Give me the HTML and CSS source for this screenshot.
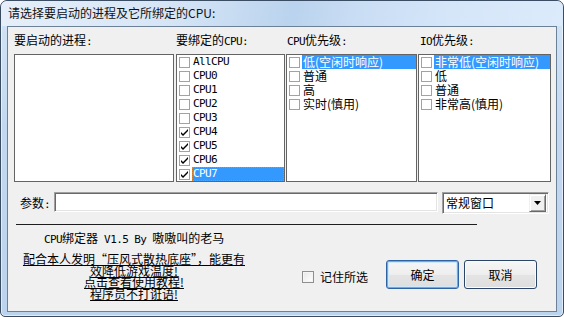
FILE: index.html
```html
<!DOCTYPE html>
<html lang="zh-CN">
<head>
<meta charset="utf-8">
<title>CPU绑定器</title>
<link rel="stylesheet" href="styles.css">
</head>
<body>
<div class="window">
  <div class="titlebar">请选择要启动的进程及它所绑定的CPU:</div>
  <div class="client">
    <div class="cols">
      <div class="col c1">
        <div class="lab">要启动的进程<span class="m">:</span></div>
        <div class="list"></div>
      </div>
      <div class="col c2">
        <div class="lab">要绑定的<span class="m">CPU:</span></div>
        <div class="list">
          <div class="row"><span class="cb"></span><span class="t m">AllCPU</span></div>
          <div class="row"><span class="cb"></span><span class="t m">CPU0</span></div>
          <div class="row"><span class="cb"></span><span class="t m">CPU1</span></div>
          <div class="row"><span class="cb"></span><span class="t m">CPU2</span></div>
          <div class="row"><span class="cb"></span><span class="t m">CPU3</span></div>
          <div class="row"><span class="cb on"><svg viewBox="0 0 9 9" width="9" height="9"><path d="M1 4 L3 6 L8 1 L8 3 L3 8 L1 6 Z"/></svg></span><span class="t m">CPU4</span></div>
          <div class="row"><span class="cb on"><svg viewBox="0 0 9 9" width="9" height="9"><path d="M1 4 L3 6 L8 1 L8 3 L3 8 L1 6 Z"/></svg></span><span class="t m">CPU5</span></div>
          <div class="row"><span class="cb on"><svg viewBox="0 0 9 9" width="9" height="9"><path d="M1 4 L3 6 L8 1 L8 3 L3 8 L1 6 Z"/></svg></span><span class="t m">CPU6</span></div>
          <div class="row sel focus"><span class="cb on"><svg viewBox="0 0 9 9" width="9" height="9"><path d="M1 4 L3 6 L8 1 L8 3 L3 8 L1 6 Z"/></svg></span><span class="t m">CPU7</span></div>
        </div>
      </div>
      <div class="col c3">
        <div class="lab"><span class="m">CPU</span>优先级<span class="m">:</span></div>
        <div class="list">
          <div class="row sel"><span class="cb"></span><span class="t">低(空闲时响应)</span></div>
          <div class="row"><span class="cb"></span><span class="t">普通</span></div>
          <div class="row"><span class="cb"></span><span class="t">高</span></div>
          <div class="row"><span class="cb"></span><span class="t">实时(慎用)</span></div>
        </div>
      </div>
      <div class="col c4">
        <div class="lab"><span class="m">IO</span>优先级<span class="m">:</span></div>
        <div class="list">
          <div class="row sel"><span class="cb"></span><span class="t">非常低(空闲时响应)</span></div>
          <div class="row"><span class="cb"></span><span class="t">低</span></div>
          <div class="row"><span class="cb"></span><span class="t">普通</span></div>
          <div class="row"><span class="cb"></span><span class="t">非常高(慎用)</span></div>
        </div>
      </div>
    </div>

    <div class="param">
      <div class="plab">参数<span class="m">:</span></div>
      <div class="input"></div>
      <div class="combo">
        <span class="ctext">常规窗口</span>
        <span class="dd"><svg viewBox="0 0 7 4" width="7" height="4"><path d="M0 0 H7 L3.5 4 Z"/></svg></span>
      </div>
    </div>

    <div class="sep"></div>

    <div class="about"><span class="m">CPU</span>绑定器<span class="m"> V1.5 By </span>嗷嗷叫的老马</div>

    <div class="bottom">
      <div class="promo">配合本人发明“压风式散热底座”，能更有<br>效降低游戏温度!<br>点击查看使用教程!<br>程序员不打诳语!</div>
      <div class="remember"><span class="rcb"></span><span class="rtext">记住所选</span></div>
      <div class="btn def">确定</div>
      <div class="btn">取消</div>
    </div>
  </div>
</div>
</body>
</html>
```

FILE: styles.css
```css
* { box-sizing: border-box; margin: 0; padding: 0; }
html, body { width: 564px; height: 317px; overflow: hidden; background: #ffffff; }
body {
  font-family: "Noto Sans CJK SC", "Noto Sans", sans-serif;
  font-size: 12px;
  color: #000;
}
.m { font-family: "DejaVu Sans Mono", "Liberation Mono", monospace; font-size: 11px; letter-spacing: -0.6px; }

.window {
  width: 564px;
  height: 317px;
  border: 1px solid #3b4d63;
  border-radius: 7px 7px 5px 5px;
  background: linear-gradient(to bottom, #d3e4f6 0%, #c3d8f0 40%, #bcd3ed 100%);
  box-shadow: inset 0 0 0 1px rgba(255,255,255,0.55);
  padding: 0 6px 4px 6px;
  display: flex;
  flex-direction: column;
  overflow: hidden;
}
.titlebar {
  height: 25px;
  line-height: 24px;
  margin: 0 -6px;
  padding-left: 7px;
  color: #111;
  background: linear-gradient(100deg, #e6eff9 0%, #d6e5f6 30%, #bad3ee 52%, #c8dcf3 62%, #d5e6f9 80%, #dcebfb 100%);
  border-radius: 6px 6px 0 0;
}
.client {
  flex: 1;
  border: 1px solid #6d8196;
  background: #f0f0f0;
  display: flex;
  flex-direction: column;
}

.cols {
  display: flex;
  margin-top: 6px;
  margin-left: 6px;
}
.col { display: flex; flex-direction: column; gap: 7px; }
.c1 { width: 160px; margin-right: 2px; }
.c2 { width: 109px; margin-right: 1px; }
.c3 { width: 131px; margin-right: 1px; }
.c4 { width: 133px; }
.c3 .lab { padding-left: 1px; }
.c4 .lab { padding-left: 2px; }
.lab { height: 14px; line-height: 14px; white-space: nowrap; }

.list {
  height: 128px;
  border: 1px solid #646464;
  background: #fff;
}
.row {
  height: 14px;
  display: flex;
  align-items: center;
  padding-left: 2px;
  white-space: nowrap;
}
.cb {
  width: 11px;
  height: 11px;
  flex: none;
  border: 1px solid #a2a2a2;
  background: #fff;
  margin-right: 2px;
  display: flex;
  align-items: center;
  justify-content: center;
}
.cb svg { display: block; fill: #000; }
.t { line-height: 14px; height: 14px; padding-left: 1px; flex: 1; }
.sel .t { background: #3399ff; color: #fff; }
.focus .t { border: 1px dotted #d6893a; line-height: 12px; padding-left: 0; }

.param {
  display: flex;
  align-items: flex-start;
  margin-top: 10px;
  height: 22px;
}
.plab { width: 34px; margin-left: 12px; height: 20px; line-height: 21px; }
.input {
  width: 384px;
  height: 20px;
  background: #fff;
  border: 1px solid;
  border-color: #a0a0a0 #ffffff #ffffff #a0a0a0;
  box-shadow: inset 1px 1px 0 #696969, inset -1px -1px 0 #e3e3e3;
}
.combo {
  width: 107px;
  height: 22px;
  margin-left: 4px;
  background: #fff;
  border: 1px solid;
  border-color: #a0a0a0 #ffffff #ffffff #a0a0a0;
  box-shadow: inset 1px 1px 0 #696969, inset -1px -1px 0 #e3e3e3;
  display: flex;
  align-items: center;
  padding: 2px;
}
.ctext { flex: 1; padding-left: 1px; line-height: 18px; }
.dd {
  width: 17px;
  height: 18px;
  background: #f0f0f0;
  border: 1px solid;
  border-color: #f0f0f0 #696969 #696969 #f0f0f0;
  box-shadow: inset 1px 1px 0 #ffffff, inset -1px -1px 0 #a0a0a0;
  display: flex;
  align-items: center;
  justify-content: center;
}
.dd svg { display: block; fill: #000; }

.sep {
  margin-top: 10px;
  margin-left: 8px;
  width: 461px;
  height: 1px;
  background: #1e1e1e;
}
.about {
  margin-top: 6px;
  margin-left: 36px;
  height: 14px;
  line-height: 14px;
  white-space: nowrap;
}

.bottom {
  display: flex;
  align-items: flex-start;
  margin-top: 8px;
}
.promo {
  width: 228px;
  margin-left: 12px;
  line-height: 11.5px;
  text-align: center;
  text-decoration: underline;
  white-space: nowrap;
}
.remember {
  display: flex;
  align-items: center;
  margin-left: 54px;
  margin-top: 18px;
  height: 12px;
}
.rcb {
  width: 12px;
  height: 12px;
  border: 1px solid #8e8f8f;
  background: linear-gradient(135deg, #e6e6e6, #ffffff);
  box-shadow: inset 0 0 0 1px #f4f4f4;
}
.rtext { margin-left: 6px; line-height: 12px; white-space: nowrap; }
.btn {
  width: 73px;
  height: 29px;
  margin-top: 7px;
  margin-left: 5px;
  border: 1px solid #2a4567;
  border-radius: 3px;
  background: linear-gradient(to bottom, #f6f6f6 0%, #eeeeee 50%, #e4e4e4 51%, #dedede 100%);
  box-shadow: inset 0 0 0 1px #fbfbfb;
  display: flex;
  align-items: center;
  justify-content: center;
  line-height: 14px;
}
.btn.def {
  margin-left: 18px;
  border-color: #2f62a3;
  box-shadow: inset 0 0 0 1px #5fb0ee, inset 0 0 0 2px #cfe8fa;
}
```
